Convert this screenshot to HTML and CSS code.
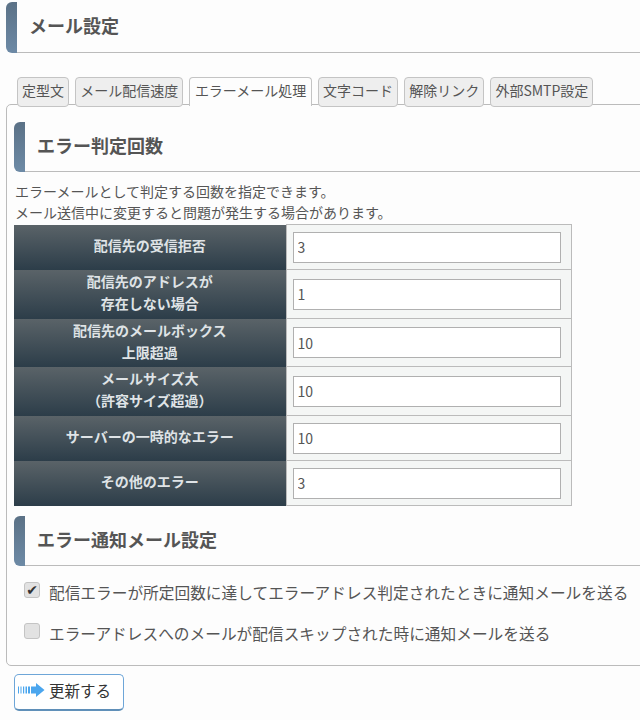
FILE: index.html
```html
<!DOCTYPE html>
<html lang="ja">
<head>
<meta charset="utf-8">
<title>メール設定</title>
<link rel="stylesheet" href="styles.css">
</head>
<body>
<div class="page">
  <h1 class="heading heading-page"><span class="bar"></span><span class="title">メール設定</span></h1>
  <ul class="tabs">
    <li class="tab">定型文</li>
    <li class="tab">メール配信速度</li>
    <li class="tab active">エラーメール処理</li>
    <li class="tab">文字コード</li>
    <li class="tab">解除リンク</li>
    <li class="tab">外部SMTP設定</li>
  </ul>
  <section class="panel">
    <h2 class="heading"><span class="bar"></span><span class="title">エラー判定回数</span></h2>
    <p class="desc">エラーメールとして判定する回数を指定できます。<br>メール送信中に変更すると問題が発生する場合があります。</p>
    <table class="grid">
      <tr class="r45"><th>配信先の受信拒否</th><td><input class="num" type="text" value="3"></td></tr>
      <tr class="r49"><th>配信先のアドレスが<br>存在しない場合</th><td><input class="num" type="text" value="1"></td></tr>
      <tr class="r48"><th>配信先のメールボックス<br>上限超過</th><td><input class="num" type="text" value="10"></td></tr>
      <tr class="r49"><th>メールサイズ大<br>（許容サイズ超過）</th><td><input class="num" type="text" value="10"></td></tr>
      <tr class="r45"><th>サーバーの一時的なエラー</th><td><input class="num" type="text" value="10"></td></tr>
      <tr class="r45"><th>その他のエラー</th><td><input class="num" type="text" value="3"></td></tr>
    </table>
    <h2 class="heading heading-second"><span class="bar"></span><span class="title">エラー通知メール設定</span></h2>
    <div class="checks">
      <label class="check"><input class="box" type="checkbox" checked>配信エラーが所定回数に達してエラーアドレス判定されたときに通知メールを送る</label>
      <label class="check"><input class="box" type="checkbox">エラーアドレスへのメールが配信スキップされた時に通知メールを送る</label>
    </div>
  </section>
  <button class="submit" type="button">
    <svg class="arrow" width="27" height="16" viewBox="0 0 27 16">
      <path d="M0 4.500h1v7H0zM2.500 4.500h1v7h-1zM5 4.500h1.200v7H5zM7.500 4.500h1.500v7H7.500zM10 4.500h2v7h-2zM13 4.500h5V1l8.500 7L18 15v-3.500h-5z" fill="#4ba6ee"/>
    </svg>更新する
  </button>
</div>
</body>
</html>
```
FILE: styles.css
```css
* { box-sizing: border-box; }
html, body { margin: 0; padding: 0; background: #fdfdfd; }
body {
  font-family: "Noto Sans CJK JP", "Open Sans", sans-serif;
  font-size: 14px;
  color: #555;
  overflow: hidden;
  height: 720px;
}
.page { padding-top: 2px; }
.heading {
  display: flex;
  height: 50px;
  margin: 0;
  font-size: 18px;
  font-weight: 700;
  color: #555;
}
.heading-page { height: 51px; margin-left: 6px; }
.heading-second { margin-top: 10px; }
.bar {
  flex: none;
  width: 11px;
  border-radius: 6px 0 0 6px;
  background: linear-gradient(#5b7186, #6d8aa6);
}
.title {
  flex: 1;
  padding-left: 12px;
  line-height: 46px;
  border-bottom: 1px solid #bbb;
}
.tabs {
  display: flex;
  gap: 6.2px;
  list-style: none;
  margin: 24px 0 -3px 17px;
  padding: 0;
  position: relative;
  z-index: 1;
}
.tab {
  padding: 0 4px;
  height: 30px;
  line-height: 25px;
  white-space: nowrap;
  background: #eee;
  border: 1px solid #c4c4c4;
  border-radius: 4px;
}
.tab.active {
  height: 29px;
  padding: 0 4.5px;
  background: #fdfdfd;
  border-bottom: 0;
  border-radius: 4px 4px 0 0;
}
.panel {
  margin: 0 -10px 0 6px;
  padding: 17px 0 0 7px;
  height: 562px;
  border: 1px solid #bbb;
  border-radius: 5px;
}
.desc {
  margin: 9px 0 0 1px;
  padding-bottom: 1px;
  line-height: 21px;
  color: #555;
}
.grid {
  width: 558px;
  border-collapse: collapse;
  table-layout: fixed;
}
.r45 { height: 45px; }
.r48 { height: 48px; }
.r49 { height: 49px; }
.grid th {
  width: 272px;
  padding: 0 0 4px;
  font-size: 14px;
  font-weight: 700;
  line-height: 22px;
  color: #dfe3e6;
  background: linear-gradient(#5a6368, #2c3d49);
  border: 0;
}
.grid td {
  padding: 0 10px 0 6px;
  background: #f4f6f5;
  border: 1px solid #bbb;
}
.num {
  display: block;
  width: 100%;
  height: 31px;
  padding: 0 4px;
  font-family: "Noto Sans CJK JP", sans-serif;
  font-size: 14px;
  color: #555;
  background: #fff;
  border: 1px solid #b0b0b0;
  border-radius: 0;
  outline: 0;
}
.checks {
  display: flex;
  flex-direction: column;
  gap: 19px;
  margin: 15px 0 0 10px;
}
.check {
  display: flex;
  align-items: center;
  height: 22px;
  font-size: 15.7px;
  white-space: nowrap;
  color: #555;
}
.box {
  appearance: none;
  flex: none;
  display: grid;
  place-items: center;
  width: 16px;
  height: 16px;
  margin: -4px 9px 0 0;
  background: #e2e2e2;
  border: 1px solid #c4c4c4;
  border-radius: 3px;
}
.box:checked::after {
  content: "✔";
  font-family: "DejaVu Sans", sans-serif;
  font-size: 14px;
  line-height: 14px;
  color: #333;
}
.submit {
  display: flex;
  align-items: center;
  width: 110px;
  height: 37px;
  margin: 8px 0 0 14px;
  padding: 0 0 4px 3px;
  font-family: "Noto Sans CJK JP", sans-serif;
  font-size: 15.5px;
  color: #333;
  background: #fff;
  border: 1px solid #6ea6d8;
  border-bottom: 2px solid #5f8fb8;
  border-radius: 5px;
}
.arrow { flex: none; margin-right: 4px; }
```
